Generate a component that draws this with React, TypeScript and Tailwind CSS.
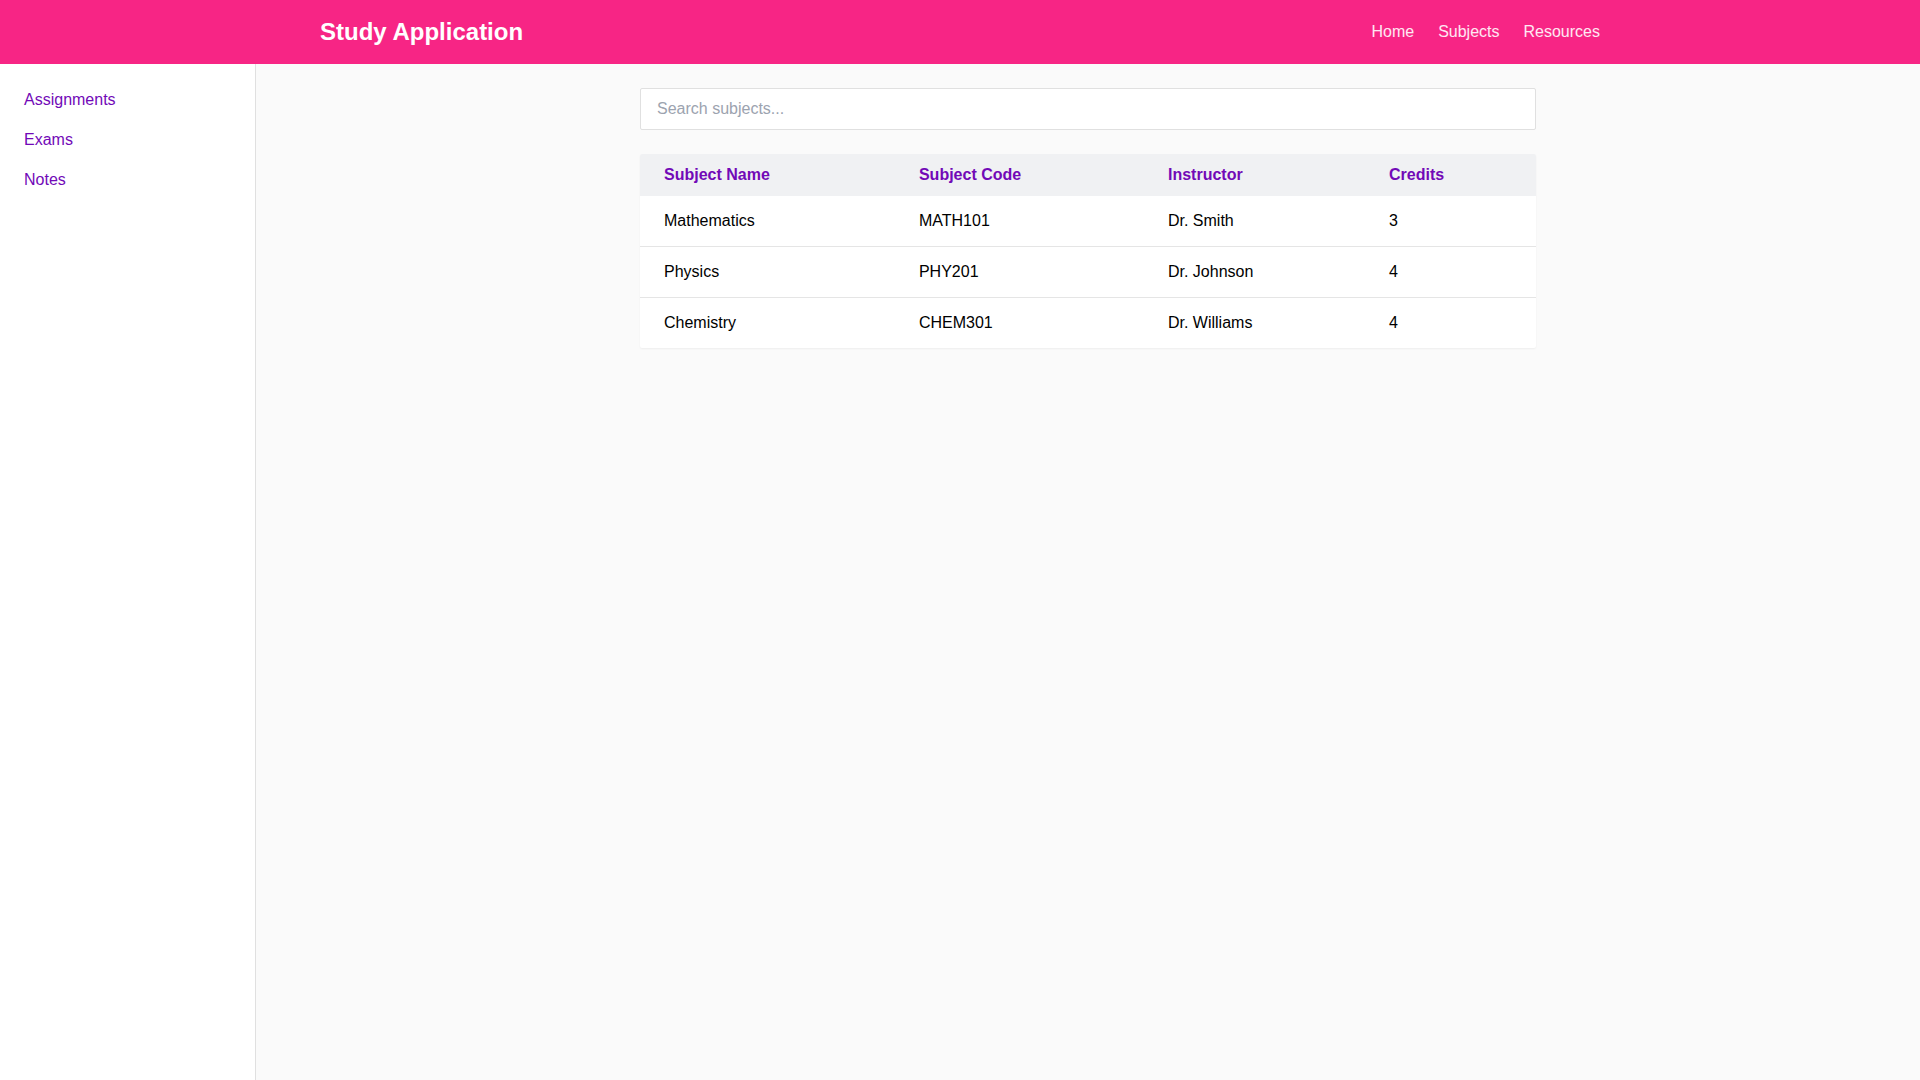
const navLinks = ['Home', 'Subjects', 'Resources'];
const sideLinks = ['Assignments', 'Exams', 'Notes'];

const subjects = [
  { name: 'Mathematics', code: 'MATH101', instructor: 'Dr. Smith', credits: 3 },
  { name: 'Physics', code: 'PHY201', instructor: 'Dr. Johnson', credits: 4 },
  { name: 'Chemistry', code: 'CHEM301', instructor: 'Dr. Williams', credits: 4 },
];

export default function App() {
  return (
    <div className="min-h-screen flex flex-col bg-[#fafafa] font-['Liberation_Sans',Arial,sans-serif] text-base text-black">
      {/* Header */}
      <header className="h-16 bg-[#f72585] text-white">
        <div className="max-w-7xl h-full mx-auto flex items-center justify-between">
          <h1 className="text-2xl font-bold">Study Application</h1>
          <nav className="flex gap-6">
            {navLinks.map((link) => (
              <a key={link} href="#" className="text-white/90">
                {link}
              </a>
            ))}
          </nav>
        </div>
      </header>

      <div className="flex flex-1">
        {/* Sidebar */}
        <aside className="w-64 bg-white border-r border-[#e0e0e0] p-6">
          <ul className="flex flex-col gap-4">
            {sideLinks.map((link) => (
              <li key={link}>
                <a href="#" className="text-[#7209b7]">
                  {link}
                </a>
              </li>
            ))}
          </ul>
        </aside>

        {/* Main */}
        <main className="flex-1 p-6">
          <div className="max-w-4xl mx-auto">
            <input
              type="text"
              placeholder="Search subjects..."
              className="w-full mb-6 px-4 py-2 bg-white border border-[#e0e0e0] rounded-xs placeholder:text-[#9ca3af]"
            />
            <div className="bg-white rounded-xs shadow-[0_1px_2px_rgba(0,0,0,0.05)] overflow-hidden">
              <table className="w-full leading-[normal] text-left">
                <thead className="bg-[#f0f1f3]">
                  <tr>
                    <th className="px-6 py-3 font-bold text-[#7209b7]">Subject Name</th>
                    <th className="px-6 py-3 font-bold text-[#7209b7]">Subject Code</th>
                    <th className="px-6 py-3 font-bold text-[#7209b7]">Instructor</th>
                    <th className="px-6 py-3 font-bold text-[#7209b7]">Credits</th>
                  </tr>
                </thead>
                <tbody>
                  {subjects.map((subject) => (
                    <tr key={subject.code} className="border-b border-[#e5e5e5] last:border-b-0">
                      <td className="px-6 py-4">{subject.name}</td>
                      <td className="px-6 py-4">{subject.code}</td>
                      <td className="px-6 py-4">{subject.instructor}</td>
                      <td className="px-6 py-4">{subject.credits}</td>
                    </tr>
                  ))}
                </tbody>
              </table>
            </div>
          </div>
        </main>
      </div>
    </div>
  );
}
